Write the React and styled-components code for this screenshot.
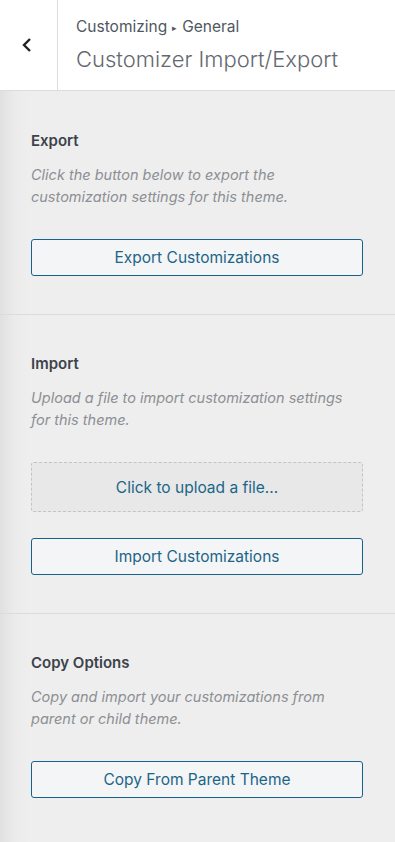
import React from "react"
import styled, { createGlobalStyle } from "styled-components"

const GlobalStyle = createGlobalStyle`
  html, body {
    margin: 0;
    padding: 0;
    background: #eeeeee;
  }
  body {
    font-family: Inter, "Noto Sans", "Liberation Sans", sans-serif;
    -webkit-font-smoothing: antialiased;
  }
  * {
    box-sizing: border-box;
  }
`

const Panel = styled.div`
  width: 395px;
  min-height: 842px;
  display: flex;
  flex-direction: column;
  background: #eeeeee;
`

const Header = styled.header`
  display: flex;
  height: 91px;
  background: #fff;
  border-bottom: 1px solid #dcdcde;
`

const BackButton = styled.button`
  width: 58px;
  flex: none;
  display: flex;
  align-items: center;
  justify-content: center;
  padding: 0 4px 0 0;
  background: transparent;
  border: none;
  border-right: 1px solid #dcdcde;
  color: #1d2327;
  cursor: pointer;
`

const Titles = styled.div`
  display: flex;
  flex-direction: column;
  padding: 16px 0 0 18px;
`

const Crumb = styled.span`
  font-size: 15.5px;
  line-height: 22px;
  color: #50575e;
`

const Arrow = styled.span`
  font-size: 9px;
  margin: 0 5px 0 5px;
  position: relative;
  top: -1px;
`

const Title = styled.h1`
  margin: 5px 0 0;
  font-size: 22px;
  font-weight: 300;
  line-height: 28px;
  color: #646970;
`

const Body = styled.div`
  flex: 1;
  padding-top: 1px;
  background: linear-gradient(to right, #e0e0e0 0px, #ebebeb 14px, #eeeeee 28px);
`

const Section = styled.section`
  padding: 38px 31px 38px 31px;
  border-bottom: ${(p) => (p.$last ? "none" : "1px solid #dcdcde")};
`

const Heading = styled.h3`
  margin: 0;
  font-size: 15px;
  font-weight: 600;
  line-height: 22px;
  color: #3c434a;
`

const Description = styled.p`
  margin: 12px 0 0;
  font-size: 14.5px;
  font-style: italic;
  line-height: 22px;
  color: #8c8f94;
  max-width: 325px;
`

const Button = styled.button`
  display: block;
  width: 332px;
  height: 37px;
  margin-top: ${(p) => p.$top || "31px"};
  background: #f4f5f6;
  border: 1px solid #16628a;
  border-radius: 3px;
  color: #1b6588;
  font-family: inherit;
  font-size: 15.5px;
  line-height: 1;
  cursor: pointer;
`

const Upload = styled.div`
  width: 332px;
  height: 50px;
  margin-top: 31px;
  display: flex;
  align-items: center;
  justify-content: center;
  background: #e8e8e8;
  border: 1px dashed #c3c4c7;
  border-radius: 3px;
  color: #1b6588;
  font-size: 15.5px;
  cursor: pointer;
`

const Chevron = () => (
  <svg width="14" height="16" viewBox="0 0 14 16" aria-hidden="true">
    <path d="M10 2 L4 8 L10 14" fill="none" stroke="currentColor" strokeWidth="2.4" />
  </svg>
)

const sections = [
  {
    title: "Export",
    text: "Click the button below to export the customization settings for this theme.",
    button: "Export Customizations",
  },
  {
    title: "Import",
    text: "Upload a file to import customization settings for this theme.",
    upload: "Click to upload a file...",
    button: "Import Customizations",
  },
  {
    title: "Copy Options",
    text: "Copy and import your customizations from parent or child theme.",
    button: "Copy From Parent Theme",
  },
]

const App = () => (
  <>
    <GlobalStyle />
    <Panel>
      <Header>
        <BackButton aria-label="Back">
          <Chevron />
        </BackButton>
        <Titles>
          <Crumb>
            Customizing<Arrow>▸</Arrow>General
          </Crumb>
          <Title>Customizer Import/Export</Title>
        </Titles>
      </Header>
      <Body>
        {sections.map((s, i) => (
          <Section key={s.title} $last={i === sections.length - 1}>
            <Heading>{s.title}</Heading>
            <Description>{s.text}</Description>
            {s.upload && <Upload>{s.upload}</Upload>}
            <Button $top={s.upload ? "26px" : "31px"}>{s.button}</Button>
          </Section>
        ))}
      </Body>
    </Panel>
  </>
)

export default App
